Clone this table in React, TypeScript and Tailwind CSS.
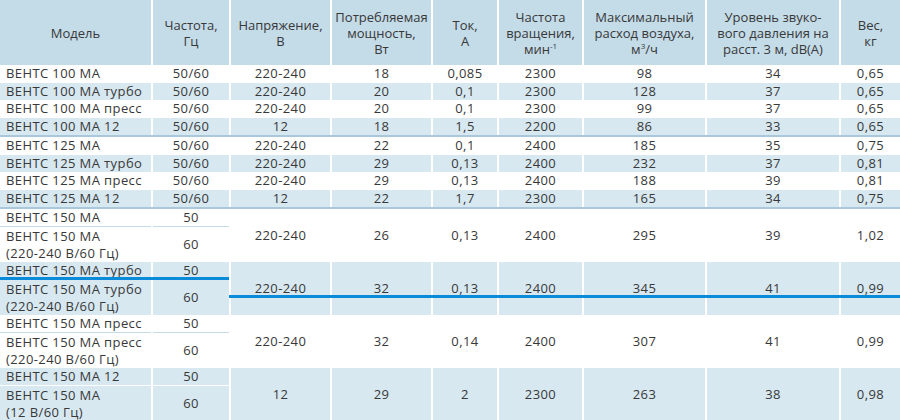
import React from 'react';

const cols = 'grid grid-cols-[151px_76px_99px_99px_64px_83px_121px_132px_59px] gap-x-[2px] bg-white';

type Row = { model: string; values: string[] };

const groupA: Row[] = [
    { model: 'ВЕНТС 100 МА', values: ['50/60', '220-240', '18', '0,085', '2300', '98', '34', '0,65'] },
    { model: 'ВЕНТС 100 МА турбо', values: ['50/60', '220-240', '20', '0,1', '2300', '128', '37', '0,65'] },
    { model: 'ВЕНТС 100 МА пресс', values: ['50/60', '220-240', '20', '0,1', '2300', '99', '37', '0,65'] },
    { model: 'ВЕНТС 100 МА 12', values: ['50/60', '12', '18', '1,5', '2200', '86', '33', '0,65'] },
];

const groupB: Row[] = [
    { model: 'ВЕНТС 125 МА', values: ['50/60', '220-240', '22', '0,1', '2400', '185', '35', '0,75'] },
    { model: 'ВЕНТС 125 МА турбо', values: ['50/60', '220-240', '29', '0,13', '2400', '232', '37', '0,81'] },
    { model: 'ВЕНТС 125 МА пресс', values: ['50/60', '220-240', '29', '0,13', '2400', '188', '39', '0,81'] },
    { model: 'ВЕНТС 125 МА 12', values: ['50/60', '12', '22', '1,7', '2300', '165', '34', '0,75'] },
];

const bigRows = [
    {
        top: 'ВЕНТС 150 МА',
        bottom: ['ВЕНТС 150 МА', '(220-240 В/60 Гц)'],
        values: ['220-240', '26', '0,13', '2400', '295', '39', '1,02'],
    },
    {
        top: 'ВЕНТС 150 МА турбо',
        bottom: ['ВЕНТС 150 МА турбо', '(220-240 В/60 Гц)'],
        values: ['220-240', '32', '0,13', '2400', '345', '41', '0,99'],
    },
    {
        top: 'ВЕНТС 150 МА пресс',
        bottom: ['ВЕНТС 150 МА пресс', '(220-240 В/60 Гц)'],
        values: ['220-240', '32', '0,14', '2400', '307', '41', '0,99'],
    },
    {
        top: 'ВЕНТС 150 МА 12',
        bottom: ['ВЕНТС 150 МА', '(12 В/60 Гц)'],
        values: ['12', '29', '2', '2300', '263', '38', '0,98'],
    },
];

const HeadCell = ({ children }: { children: React.ReactNode }) => (
    <div className="bg-[#c4dbe8] flex items-center justify-center text-center text-[13px] leading-[16px] tracking-normal">
        <div>{children}</div>
    </div>
);

const SimpleGroup = ({ rows }: { rows: Row[] }) => (
    <div>
        {rows.map((r, i) => {
            const bg = i % 2 === 1 ? 'bg-[#d7e8f1]' : 'bg-white';
            return (
                <div key={r.model} className={`${cols} h-[17.5px] leading-[17.5px]`}>
                    <div className={`${bg} pl-[6px] whitespace-nowrap`}>{r.model}</div>
                    {r.values.map((v, j) => (
                        <div key={j} className={`${bg} text-center`}>
                            {v}
                        </div>
                    ))}
                </div>
            );
        })}
        <div className="h-[2px] bg-[#a9c8dc]" />
    </div>
);

export default function App() {
    return (
        <div
            className="relative w-[900px] h-[420px] overflow-hidden bg-white text-[13px] tracking-[0.4px] text-[#383838]"
            style={{ fontFamily: '"Open Sans", "Noto Sans", sans-serif' }}
        >
            <div className={`${cols} h-[65px]`}>
                <HeadCell>Модель</HeadCell>
                <HeadCell>
                    Частота,
                    <br />
                    Гц
                </HeadCell>
                <HeadCell>
                    Напряжение,
                    <br />В
                </HeadCell>
                <HeadCell>
                    Потребляемая
                    <br />
                    мощность,
                    <br />
                    Вт
                </HeadCell>
                <HeadCell>
                    Ток,
                    <br />А
                </HeadCell>
                <HeadCell>
                    Частота
                    <br />
                    вращения,
                    <br />
                    мин<sup className="text-[8px] -top-[5px]">-1</sup>
                </HeadCell>
                <HeadCell>
                    Максимальный
                    <br />
                    расход воздуха,
                    <br />
                    м<sup className="text-[8px] -top-[5px]">3</sup>/ч
                </HeadCell>
                <HeadCell>
                    Уровень звуко-
                    <br />
                    вого давления на
                    <br />
                    расст. 3 м, dB(A)
                </HeadCell>
                <HeadCell>
                    Вес,
                    <br />
                    кг
                </HeadCell>
            </div>

            <SimpleGroup rows={groupA} />
            <SimpleGroup rows={groupB} />

            {bigRows.map((r, i) => {
                const blue = i % 2 === 1;
                const bg = blue ? 'bg-[#d7e8f1]' : 'bg-white';
                const line = blue ? 'border-white' : 'border-[#c4dbe8]';
                return (
                    <div key={r.top} className={`${cols} grid-rows-[17px_36px] h-[53px]`}>
                        <div className={`${bg} pl-[6px] leading-[17px] whitespace-nowrap`}>{r.top}</div>
                        <div className={`${bg} text-center leading-[17px]`}>50</div>
                        {r.values.map((v, j) => (
                            <div key={j} className={`${bg} row-span-2 flex items-center justify-center`}>
                                {v}
                            </div>
                        ))}
                        <div
                            className={`${bg} ${line} border-t col-start-1 row-start-2 pl-[6px] leading-[16.5px] flex flex-col justify-center whitespace-nowrap`}
                        >
                            <span>{r.bottom[0]}</span>
                            <span>{r.bottom[1]}</span>
                        </div>
                        <div
                            className={`${bg} ${line} border-t col-start-2 row-start-2 flex items-center justify-center`}
                        >
                            60
                        </div>
                    </div>
                );
            })}

            <div className="absolute left-0 top-[277px] w-[229px] h-[3px] bg-[#0a8bd9]" />
            <div className="absolute left-[229px] right-0 top-[295px] h-[3px] bg-[#0a8bd9]" />
        </div>
    );
}
